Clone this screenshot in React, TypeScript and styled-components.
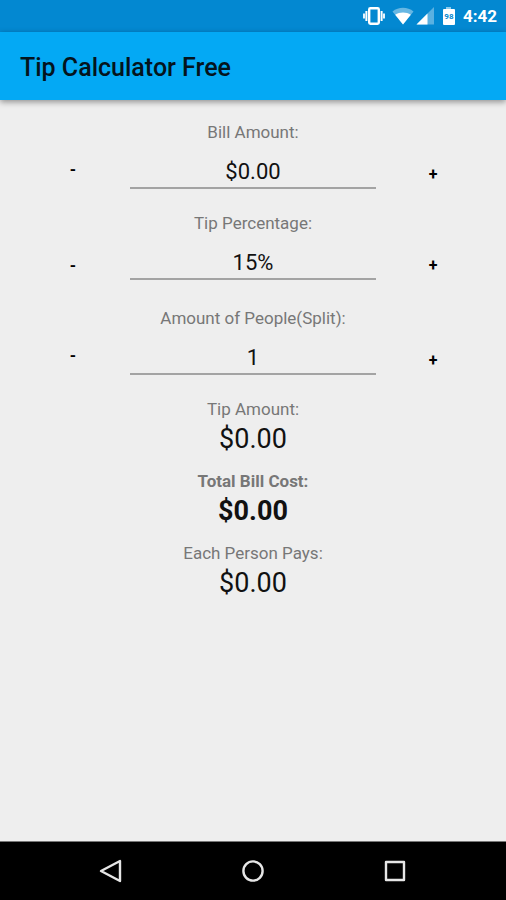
import React, { useState } from "react";
import styled, { createGlobalStyle } from "styled-components";

const GlobalStyle = createGlobalStyle`
  *, *::before, *::after { box-sizing: border-box; }
  body {
    margin: 0;
    background: #eeeeee;
    color: #111111;
    font-family: Roboto, "Liberation Sans", sans-serif;
  }
`;

const Screen = styled.div`
  display: flex;
  flex-direction: column;
  min-height: 100vh;
`;

const StatusBar = styled.div`
  display: flex;
  align-items: center;
  justify-content: flex-end;
  height: 32px;
  padding: 0 9px 0 16px;
  background: #0388d1;
  color: #ffffff;

  svg { display: block; }
`;

const StatusIcons = styled.div`
  display: flex;
  align-items: center;
  margin-right: 8px;
`;

const Clock = styled.time`
  font-size: 17px;
  font-weight: 700;
  line-height: 24px;
`;

const AppBar = styled.header`
  display: flex;
  align-items: center;
  height: 68px;
  padding: 4px 20px 0;
  background: #04a9f4;
  box-shadow: 0 2px 6px rgba(0, 0, 0, 0.4);
`;

const Title = styled.h1`
  margin: 0;
  font-size: 25px;
  font-weight: 500;
  line-height: 32px;
  color: #04141d;
`;

const Content = styled.main`
  flex: 1;
  padding: 20px 16px;
`;

const Form = styled.form`
  display: flex;
  flex-direction: column;
  gap: 22px;
`;

const Field = styled.div<{ $spaced?: boolean }>`
  display: flex;
  flex-direction: column;
  margin-top: ${(p) => (p.$spaced ? "4px" : "0")};
`;

const FieldLabel = styled.label`
  align-self: center;
  font-size: 17px;
  line-height: 24px;
  color: #777777;
`;

const Stepper = styled.div`
  display: grid;
  grid-template-columns: 1fr 52% 1fr;
  align-items: center;
  height: 45px;
`;

const StepButton = styled.button<{ $raised?: boolean }>`
  align-self: ${(p) => (p.$raised ? "flex-start" : "flex-end")};
  justify-self: center;
  width: 64px;
  height: 40px;
  padding: 12px 0 0;
  border: 0;
  background: transparent;
  color: #000000;
  font: 700 16px/24px Roboto, "Liberation Sans", sans-serif;
  cursor: pointer;
`;

const ValueInput = styled.input`
  align-self: stretch;
  width: 100%;
  min-width: 0;
  padding: 12px 0 0;
  border: 0;
  border-bottom: 2px solid #a3a3a3;
  border-radius: 0;
  outline: 0;
  background: transparent;
  color: #111111;
  font: 400 22px/28px Roboto, "Liberation Sans", sans-serif;
  text-align: center;
`;

const Results = styled.dl`
  display: flex;
  flex-direction: column;
  gap: 12px;
  margin: 20px 0 0;
  text-align: center;
`;

const Result = styled.div<{ $strong?: boolean }>`
  font-weight: ${(p) => (p.$strong ? 700 : 400)};
`;

const ResultLabel = styled.dt`
  font-size: 17px;
  line-height: 28px;
  color: #777777;
`;

const ResultValue = styled.dd`
  margin: 0;
  font-size: 27px;
  line-height: 32px;
`;

const NavBar = styled.nav`
  display: flex;
  align-items: center;
  justify-content: center;
  gap: 94px;
  height: 59px;
  border-top: 1px solid #777777;
  background: #000000;
`;

const NavButton = styled.button`
  display: grid;
  place-items: center;
  width: 48px;
  height: 48px;
  padding: 0;
  border: 0;
  background: transparent;
  color: #e6e6e6;
  cursor: pointer;

  svg {
    fill: none;
    stroke: currentColor;
    stroke-width: 2.4;
    stroke-linejoin: round;
  }
`;

const VibrateIcon = () => (
  <svg width="24" height="20" viewBox="0 0 24 20" fill="none" stroke="currentColor" aria-hidden="true">
    <rect x="7.2" y="2.2" width="9.6" height="15.6" rx="1.2" strokeWidth="2.4" />
    <path d="M4.4 5v10M19.6 5v10" strokeWidth="2" />
    <path d="M2 7.5v5M22 7.5v5" strokeWidth="1.8" />
  </svg>
);

const WifiIcon = () => (
  <svg width="22" height="18" viewBox="0 0 22 18" aria-hidden="true">
    <path d="M0.5 4.5C6.5 -0.5 15.5 -0.5 21.5 4.5L11 17.5Z" fill="#fff" opacity="0.4" />
    <path d="M3.2 7.8C7.5 4.6 14.5 4.6 18.8 7.8L11 17.5Z" fill="#fff" />
  </svg>
);

const SignalIcon = () => (
  <svg width="18" height="18" viewBox="0 0 18 18" aria-hidden="true">
    <path d="M18 0V17.5H0.5Z" fill="#fff" opacity="0.35" />
    <path d="M11.5 6.5V17.5H0.5Z" fill="#fff" />
  </svg>
);

const Battery = styled.div`
  display: flex;
  flex-direction: column;
  align-items: center;
  margin-left: 9px;

  &::before {
    content: "";
    width: 5px;
    height: 2px;
    background: #8fcbec;
  }
`;

const BatteryLevel = styled.span`
  width: 12px;
  height: 16px;
  border-radius: 1px;
  background: #ffffff;
  color: #0388d1;
  font-size: 8px;
  font-weight: 700;
  line-height: 15px;
  text-align: center;
`;

const ConnectionIcons = styled.div`
  display: flex;
  gap: 2px;
  margin-left: 6px;
`;

const money = (n: number) => `$${n.toFixed(2)}`;

interface StepFieldProps {
  id: string;
  label: string;
  value: string;
  raisedMinus?: boolean;
  spaced?: boolean;
  onStep: (delta: number) => void;
  onEdit: (value: number) => void;
}

function StepField({ id, label, value, raisedMinus, spaced, onStep, onEdit }: StepFieldProps) {
  return (
    <Field $spaced={spaced}>
      <FieldLabel htmlFor={id}>{label}</FieldLabel>
      <Stepper>
        <StepButton type="button" $raised={raisedMinus} aria-label={`Decrease ${label}`} onClick={() => onStep(-1)}>
          -
        </StepButton>
        <ValueInput
          id={id}
          inputMode="decimal"
          value={value}
          onChange={(e) => onEdit(Number(e.target.value.replace(/[^0-9.]/g, "")) || 0)}
        />
        <StepButton type="button" aria-label={`Increase ${label}`} onClick={() => onStep(1)}>
          +
        </StepButton>
      </Stepper>
    </Field>
  );
}

export default function App() {
  const [bill, setBill] = useState(0);
  const [percent, setPercent] = useState(15);
  const [people, setPeople] = useState(1);

  const tip = (bill * percent) / 100;
  const total = bill + tip;

  return (
    <>
      <GlobalStyle />
      <Screen>
        <StatusBar>
          <StatusIcons>
            <VibrateIcon />
            <ConnectionIcons>
              <WifiIcon />
              <SignalIcon />
            </ConnectionIcons>
            <Battery>
              <BatteryLevel>98</BatteryLevel>
            </Battery>
          </StatusIcons>
          <Clock>4:42</Clock>
        </StatusBar>
        <AppBar>
          <Title>Tip Calculator Free</Title>
        </AppBar>
        <Content>
          <Form onSubmit={(e) => e.preventDefault()}>
            <StepField
              id="bill"
              label="Bill Amount:"
              value={money(bill)}
              raisedMinus
              onStep={(d) => setBill(Math.max(0, bill + d))}
              onEdit={setBill}
            />
            <StepField
              id="percent"
              label="Tip Percentage:"
              value={`${percent}%`}
              onStep={(d) => setPercent(Math.max(0, percent + d))}
              onEdit={setPercent}
            />
            <StepField
              id="people"
              label="Amount of People(Split):"
              value={String(people)}
              raisedMinus
              spaced
              onStep={(d) => setPeople(Math.max(1, people + d))}
              onEdit={(n) => setPeople(Math.max(1, Math.round(n)))}
            />
          </Form>
          <Results>
            <Result>
              <ResultLabel>Tip Amount:</ResultLabel>
              <ResultValue>{money(tip)}</ResultValue>
            </Result>
            <Result $strong>
              <ResultLabel>Total Bill Cost:</ResultLabel>
              <ResultValue>{money(total)}</ResultValue>
            </Result>
            <Result>
              <ResultLabel>Each Person Pays:</ResultLabel>
              <ResultValue>{money(total / people)}</ResultValue>
            </Result>
          </Results>
        </Content>
        <NavBar>
          <NavButton type="button" aria-label="Back">
            <svg width="24" height="24" viewBox="0 0 24 24">
              <path d="M21 2V22L2 12Z" />
            </svg>
          </NavButton>
          <NavButton type="button" aria-label="Home">
            <svg width="24" height="24" viewBox="0 0 24 24">
              <circle cx="12" cy="12" r="9.6" />
            </svg>
          </NavButton>
          <NavButton type="button" aria-label="Recent apps">
            <svg width="24" height="24" viewBox="0 0 24 24">
              <rect x="3" y="3" width="18" height="18" />
            </svg>
          </NavButton>
        </NavBar>
      </Screen>
    </>
  );
}
